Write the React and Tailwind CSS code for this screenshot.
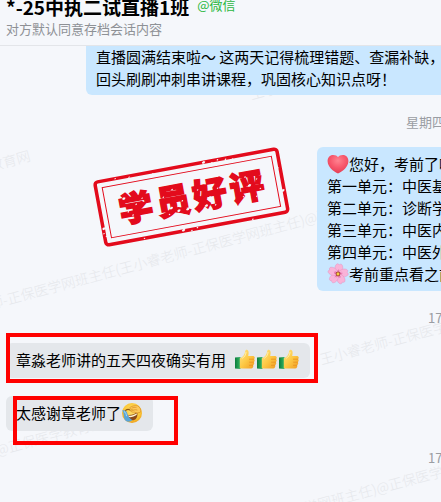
import React from "react";

const WATERMARK = "王小睿老师-正保医学网班主任(王小睿老师-正保医学网班主任)@正保医学教育网";

const marks = [
  { text: WATERMARK, place: "left-[250px] top-[84px]" },
  { text: "正保医学教育网", place: "left-[-65px] top-[170px]" },
  { text: WATERMARK, place: "left-[-65px] top-[308px]" },
  { text: WATERMARK, place: "left-[320px] top-[349px]" },
  { text: "@正保医学教育网", place: "left-[-4px] top-[440px]" },
  { text: WATERMARK, place: "left-[7px] top-[577px]" },
];

const stampChars = [
  { char: "学", x: 37 },
  { char: "员", x: 75 },
  { char: "好", x: 112 },
  { char: "评", x: 150 },
];

const specks = [
  [27, 22, 2], [33, 40, 1], [29, 36, 1], [38, 30, 1], [45, 25, 1], [50, 43, 1], [41, 47, 1],
  [66, 28, 1], [72, 40, 2], [79, 44, 2], [84, 35, 1], [76, 22, 1], [88, 44, 2], [69, 46, 1],
  [101, 27, 1], [107, 44, 2], [112, 36, 1], [121, 29, 1], [127, 41, 1], [98, 39, 1], [116, 45, 1],
  [139, 26, 1], [145, 42, 1], [153, 32, 2], [161, 27, 1], [158, 44, 1], [163, 37, 1], [150, 23, 1],
  [36, 2, 1], [112, 1, 2], [120, 3, 1], [126, 1, 1], [134, 2, 1], [141, 3, 1], [60, 3, 1],
  [2, 48, 2], [3, 56, 1], [1, 53, 1], [80, 64, 2], [88, 66, 1], [94, 64, 1], [185, 43, 2],
  [183, 52, 1], [150, 66, 1], [40, 65, 1], [184, 20, 1], [22, 1, 1],
];

const Thumb = () => (
  <svg viewBox="0 0 22 22" className="inline-block size-[22px] align-top" role="img" aria-label="赞">
    <defs>
      <linearGradient id="thumb" x1="0" y1="0" x2="1" y2="1">
        <stop offset="0" stopColor="#ffe58a" />
        <stop offset=".5" stopColor="#fdc945" />
        <stop offset="1" stopColor="#f09a20" />
      </linearGradient>
      <linearGradient id="cuff" x1="0" y1="0" x2="1" y2="0">
        <stop offset="0" stopColor="#0b7d3c" />
        <stop offset="1" stopColor="#35b766" />
      </linearGradient>
    </defs>
    <path d="M1 8.500 6.500 8v12L1 19.400Z" fill="url(#cuff)" />
    <path d="M5.800 9.200C9 8 10.600 6 11 3c.2-2 1.200-2.400 2-2.200 1.700.4 2 2.600 1.200 6.200h4.600c2 0 2.600 2.400 1.200 3.100 1 .8.9 2.500-.2 3 .8 1 .5 2.500-.6 3 .5 1.700-.3 3.400-2.100 3.500H10c-1.500 0-2.800-.1-4.200-.4Z" fill="url(#thumb)" />
    <path d="M15 10.200h5M15.200 13.200h4.600M15 16.300h4" fill="none" stroke="#e68c1c" strokeWidth=".7" />
    <path d="M12 3c-.1 3-1.600 5-3.800 6.300" fill="none" stroke="#fff2b0" strokeWidth=".9" />
  </svg>
);

const Heart = () => (
  <svg viewBox="0 0 22 22" className="inline-block size-[22px] align-top" role="img" aria-label="爱心">
    <defs>
      <radialGradient id="heart" cx=".5" cy=".3" r=".7">
        <stop offset="0" stopColor="#ff8390" />
        <stop offset=".55" stopColor="#f7566b" />
        <stop offset="1" stopColor="#e23f55" />
      </radialGradient>
    </defs>
    <path d="M11 20.600C5.500 18 .8 13.500.6 8.300.5 4.600 2.800 2 6.200 2c2.200 0 3.900.8 4.800 2.200C11.900 2.800 13.600 2 15.800 2c3.400 0 5.700 2.600 5.600 6.300C21.200 13.500 16.500 18 11 20.600Z" fill="url(#heart)" />
  </svg>
);

const Flower = () => (
  <svg viewBox="0 0 22 22" className="inline-block size-[22px] align-top" role="img" aria-label="花">
    {[8, 80, 152, 224, 296].map((deg) => (
      <g key={deg} transform={`rotate(${deg} 11 11)`}>
        <path d="M11 11.500C7 9 6.200 4 8.200 1.500c.9-1 1.800-.8 2.800.3 1-1.100 1.900-1.300 2.800-.3C15.800 4 15 9 11 11.500Z" fill="#f9b3d8" stroke="#e58bbd" strokeWidth=".4" />
        <path d="M11 10.500V6.500M11 10 9.800 7.500M11 10l1.200-2.500" stroke="#d9488e" strokeWidth=".5" />
      </g>
    ))}
    <circle cx="11" cy="11" r="2.400" fill="#a84a3c" />
    <circle cx="11" cy="11" r="1.400" fill="#f5cf3e" />
  </svg>
);

const Laugh = () => (
  <svg viewBox="0 0 22 22" className="inline-block size-[22px] align-top" role="img" aria-label="捂脸笑">
    <defs>
      <radialGradient id="face" cx=".5" cy=".4" r=".6">
        <stop offset="0" stopColor="#ffe173" />
        <stop offset=".7" stopColor="#fcc736" />
        <stop offset="1" stopColor="#eda11f" />
      </radialGradient>
    </defs>
    <circle cx="11" cy="11" r="10" fill="url(#face)" />
    <path d="M4.500 8.500c1.600-1.300 3.300-1.300 4.600-.4" fill="none" stroke="#925912" strokeWidth="1.100" strokeLinecap="round" />
    <path d="M6.200 12.800c3.600.8 7-.2 10-2.800.8 4-.4 7.500-3.600 8.200-3 .6-5.500-1.500-6.400-5.400Z" fill="#8b4a1c" />
    <path d="M7 13.500c3.200.5 6-.3 8.700-2.300l.1 1.600c-2.600 1.900-5.300 2.700-8.200 2.300Z" fill="#fff3cf" />
    <path d="M8.500 5.800c2-1.700 5.200-2.600 8-2 2.400 1 3.600 3.700 3.300 6-2 1.500-4.300 1.300-6 .4-2 .3-3.900-.3-4.500-1.400 1-.6 2.200-.7 3.200-.6-1.600-.5-3.200-.9-4-2.400Z" fill="#fdc85a" stroke="#d98f22" strokeWidth=".7" />
    <path d="M10.500 6.200c1.800-.8 3.400-1 5-.6M12.600 8c1.300-.4 2.500-.4 3.800.1" fill="none" stroke="#d98f22" strokeWidth=".7" />
    <path d="M1.200 8.500c3-.8 4.700.8 5.200 3.300.4 2.500 2.200 4.500 5 6.500-2.500 2-6.200 1.800-7.700-.9C2.400 15 3.200 11 1.200 8.500Z" fill="#58a5d8" />
    <path d="M3.300 9.600c1.300.5 1.900 2.300 2.200 4.200" fill="none" stroke="#a8dafa" strokeWidth="1" strokeLinecap="round" />
  </svg>
);

const Stamp = () => (
  <svg viewBox="-2 -2 191 71" className="absolute left-[96px] top-[162px] w-[191px] rotate-[-10.5deg]" role="img" aria-label="学员好评">
    <rect x="1" y="1" width="185" height="64" rx="3" fill="none" stroke="#e30b1c" strokeWidth="3.500" />
    <rect x="7.500" y="7.500" width="172" height="51" fill="none" stroke="#e30b1c" strokeWidth="1" />
    {stampChars.map((s) => (
      <text
        key={s.char}
        x={s.x}
        y="46"
        textAnchor="middle"
        fill="#e30b1c"
        stroke="#e30b1c"
        strokeWidth="1.500"
        className="text-[34px] font-black"
      >
        {s.char}
      </text>
    ))}
    {specks.map(([x, y, r]) => (
      <path key={`${x}-${y}`} d={`M${x - r} ${y}l${r} ${-r * 0.6} ${r * 0.8} ${r * 0.4} ${-r * 0.5} ${r * 0.8} ${-r} .3Z`} fill="#f5f7fb" />
    ))}
  </svg>
);

const Time = ({ children, className }) => (
  <p className={`mt-[17px] mb-[15px] whitespace-nowrap text-[13px] leading-5 text-[#9a9da3] ${className}`}>{children}</p>
);

const App = () => {
  return (
    <div className="relative isolate min-h-screen overflow-hidden bg-[#f5f7fb] font-['Noto_Sans_CJK_SC',sans-serif] text-[15px] leading-[22px] text-black">
      {/* watermark */}
      <div className="absolute inset-0 -z-10 overflow-hidden text-[14px] font-light leading-5 text-[#e6e8ec]" aria-hidden="true">
        {marks.map((m) => (
          <span key={m.place} className={`absolute origin-left rotate-[-15deg] whitespace-nowrap ${m.place}`}>
            {m.text}
          </span>
        ))}
      </div>

      <header className="overflow-hidden whitespace-nowrap border-b border-[#e3e5e9] bg-[#f5f7fb] px-1.5 pb-[7px]">
        <div className="-mt-[5px] flex items-start gap-2">
          <h1 className="text-[19px] font-bold leading-6">*-25中执二试直播1班</h1>
          <span className="text-[13px] leading-5 text-[#2bb741]">@微信</span>
        </div>
        <p className="text-[13px] leading-[19px] text-[#8e9196]">对方默认同意存档会话内容</p>
      </header>

      <main>
        <div className="ml-[86px] overflow-hidden whitespace-nowrap rounded-bl-md bg-[#c9e7ff] pb-[5px] pl-2.5">
          <p>直播圆满结束啦～ 这两天记得梳理错题、查漏补缺，</p>
          <p>回头刷刷冲刺串讲课程，巩固核心知识点呀！</p>
        </div>

        <Time className="ml-[406px]">星期四</Time>

        <div className="ml-[317px] overflow-hidden whitespace-nowrap rounded-l-md bg-[#c9e7ff] py-1.5 pl-2.5">
          <p><Heart />您好，考前了啦</p>
          <p>第一单元：中医基</p>
          <p>第二单元：诊断学</p>
          <p>第三单元：中医内</p>
          <p>第四单元：中医外</p>
          <p><Flower />考前重点看之前</p>
        </div>

        <Time className="ml-[428px]">17</Time>

        <div className="flex flex-col items-start gap-[18px] pl-1.5">
          <div className="relative whitespace-nowrap rounded-md bg-[#e4e7eb] px-2.5 pt-1.5 pb-[7px]">
            <p>
              章淼老师讲的五天四夜确实有用
              <span className="ml-2"><Thumb /><Thumb /><Thumb /></span>
            </p>
            <div className="absolute -top-2.5 -right-2 -bottom-[5px] left-0 border-4 border-[#ff0000]" />
          </div>
          <div className="relative whitespace-nowrap rounded-md bg-[#e4e7eb] px-2.5 pt-1.5 pb-[7px]">
            <p>太感谢章老师了<Laugh /></p>
            <div className="absolute top-0 -right-[25px] -bottom-3.5 left-[7px] border-4 border-[#ff0000]" />
          </div>
        </div>

        <Time className="ml-[428px]">17</Time>
      </main>

      <Stamp />
    </div>
  );
};

export default App;
